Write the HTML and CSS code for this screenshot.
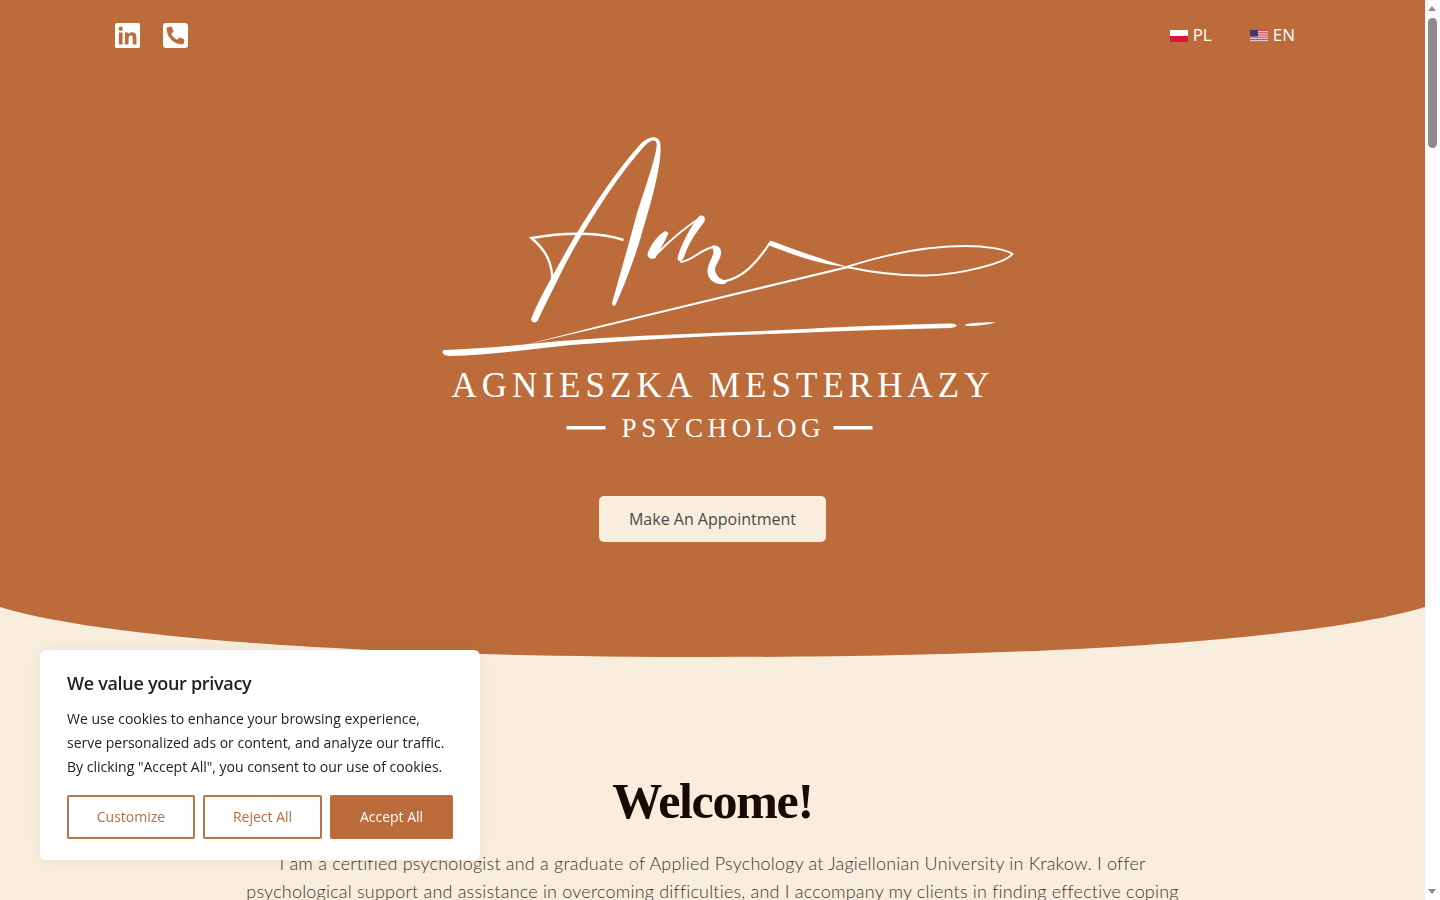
FILE: index.html
```html
<!DOCTYPE html>
<html lang="en">
<head>
  <meta charset="UTF-8">
  <meta name="viewport" content="width=device-width, initial-scale=1">
  <title>Agnieszka Mesterhazy - Psycholog</title>
  <link rel="stylesheet" href="styles.css">
</head>
<body>
  <div class="page">
    <header class="hero">
      <div class="topbar">
        <div class="social">
          <a href="#" aria-label="LinkedIn">
            <svg class="social-icon" viewBox="0 32 448 448"><path fill-rule="evenodd" d="M416 32H31.9C14.3 32 0 46.5 0 64.3v383.4C0 465.5 14.3 480 31.9 480H416c17.6 0 32-14.5 32-32.3V64.3c0-17.8-14.4-32.3-32-32.3zM135.4 416H69V202.2h66.5V416zm-33.2-243c-21.3 0-38.5-17.3-38.5-38.5S80.9 96 102.2 96c21.2 0 38.5 17.3 38.5 38.5 0 21.3-17.2 38.5-38.5 38.5zm282.1 243h-66.4V312c0-24.8-.5-56.7-34.5-56.7-34.6 0-39.9 27-39.9 54.9V416h-66.4V202.2h63.7v29.2h.9c8.9-16.8 30.6-34.5 62.9-34.5 67.2 0 79.7 44.3 79.7 101.9V416z"/></svg>
          </a>
          <a href="#" aria-label="Phone">
            <svg class="social-icon" viewBox="0 32 448 448"><path fill-rule="evenodd" transform="translate(448 0) scale(-1 1)" d="M400 32H48C21.49 32 0 53.49 0 80v352c0 26.51 21.49 48 48 48h352c26.51 0 48-21.49 48-48V80c0-26.51-21.49-48-48-48zM94 416c-7.033 0-13.057-4.873-14.616-11.627l-14.998-65a15 15 0 0 1 8.707-17.16l69.998-29.999a15 15 0 0 1 17.518 4.289l30.997 37.885c48.944-22.963 88.297-62.858 110.779-110.779l-37.885-30.997a15 15 0 0 1-4.289-17.518l30-69.998a15.001 15.001 0 0 1 17.16-8.707l65 14.998A14.997 14.997 0 0 1 384 126c0 160.292-129.945 290-290 290z"/></svg>
          </a>
        </div>
        <nav class="langs">
          <a href="#">
            <svg class="flag" viewBox="0 0 18 12"><rect width="18" height="6" fill="#fff"/><rect y="6" width="18" height="6" fill="#dc143c"/></svg>
            PL
          </a>
          <a href="#">
            <svg class="flag" viewBox="0 0 18 12">
              <rect width="18" height="12" fill="#f4e4e4"/>
              <path d="M0 .5h18M0 2.3h18M0 4.1h18M0 5.9h18M0 7.7h18M0 9.5h18M0 11.3h18" stroke="#c8354a" stroke-width=".9"/>
              <rect width="8" height="6.5" fill="#3c3b6e"/>
            </svg>
            EN
          </a>
        </nav>
      </div>

      <svg class="logo" viewBox="402.5 130 620 320">
        <!-- A -->
        <path class="ink" d="M530.5 319C540 296 552 276 562 258C585 216 618 168 640 144C648 136 657 135 659.5 142C663 160 650 205 640 238C633 262 622 290 615 305Q612 307 611.5 303C618 280 628 245 636 215C644 190 658 150 656 143C655 139 650 140 645 145C620 172 590 218 566 262C556 282 546 302 537 321Q532 325 530.5 319Z"/>
        <path class="line" stroke-width="2.4" d="M623 240C600 232 565 232 531 238C545 250 552 262 552 282"/>
        <!-- m -->
        <path class="ink" d="M647 254C650 245 657 235 665 231L668 233C665 241 658 251 655 258C651 260 647 258 647 254Z"/>
        <path class="line" stroke-width="2" d="M656 254C670 240 688 225 701 217"/>
        <path class="ink" d="M699 216C704 214 706 219 703 223C694 234 687 246 684 256C682 261 679 263 677 259C678 250 690 226 699 216Z"/>
        <path class="line" stroke-width="2" d="M680 262C690 262 702 248 713 247"/>
        <path class="ink" d="M711 246C719 244 722 250 720 256C718 263 713 267 715 272C717 278 722 281 729 280L724 284C715 285 707 280 707 271C707 264 713 256 713 252C713 249 712 248 711 246Z"/>
        <path class="line" stroke-width="2.2" d="M722 281.5C742 279 757 262 770 242"/>
        <!-- long loop -->
        <path class="ink" d="M770 240.5C795 250 820 259 848 267C820 265 793 255 769 245.5Z"/>
        <path class="line" stroke-width="1.9" d="M846 267C880 256 925 246 965 246C985 246 1005 249 1012 254C1005 263 960 275 925 275.5C895 276 870 272 846 267"/>
        <path class="ink" d="M848 265.7L848 268L600 327.5L520 346L600 325.5Z"/>
        <!-- underline -->
        <path class="ink" d="M444 350C480 349 520 345 560 341C640 335 700 333.5 760 331C810 328.5 880 325 950 323.5C958 323.5 958 327.5 950 328C900 329 840 331 770 334C700 336 640 340 570 345C530 349 490 355 450 356C442 356 440 351 444 350Z"/>
        <path class="ink" d="M966 324C975 323 985 322 995 322.5C988 324.5 976 326 968 326C964 326 964 325 966 324Z"/>
        <!-- name -->
        <text class="logo-name" x="451" y="397" textLength="538">AGNIESZKA MESTERHAZY</text>
        <rect class="ink" x="566" y="426" width="39" height="3.5"/>
        <text class="logo-job" x="621" y="437" textLength="199">PSYCHOLOG</text>
        <rect class="ink" x="833" y="426" width="39" height="3.5"/>
      </svg>

      <a class="appointment" href="#">Make An Appointment</a>
    </header>
    <svg class="hero-curve" viewBox="0 0 1425 50" preserveAspectRatio="none"><path d="M0 0C80 25 300 50 712.5 50S1345 25 1425 0Z"/></svg>

    <main class="welcome">
      <h1>Welcome!</h1>
      <p>I am a certified psychologist and a graduate of Applied Psychology at Jagiellonian University in Krakow. I offer psychological support and assistance in overcoming difficulties, and I accompany my clients in finding effective coping</p>
    </main>
  </div>

  <div class="cookie">
    <h2>We value your privacy</h2>
    <p>We use cookies to enhance your browsing experience, serve personalized ads or content, and analyze our traffic. By clicking "Accept All", you consent to our use of cookies.</p>
    <div class="cookie-buttons">
      <button class="btn-outline btn-customize">Customize</button>
      <button class="btn-outline btn-reject">Reject All</button>
      <button class="btn-fill">Accept All</button>
    </div>
  </div>

  <div class="scrollbar">
    <span class="arrow-up"></span>
    <span class="thumb"></span>
    <span class="arrow-down"></span>
  </div>
</body>
</html>
```

FILE: styles.css
```css
html, body {
  height: 100%;
  overflow: hidden;
}
body {
  margin: 0;
  background-color: #f9eedd;
  color: #43342c;
  font-family: "Open Sans", sans-serif;
}
a {
  text-decoration: none;
}
.page {
  width: 1425px;
}
.hero {
  background-color: #bc6c3a;
  height: 607px;
  display: flex;
  flex-direction: column;
  align-items: center;
}
.topbar {
  align-self: stretch;
  display: flex;
  justify-content: space-between;
  padding: 23px 130px 0 115px;
}
.social {
  display: flex;
  gap: 23px;
}
.social-icon {
  display: block;
  width: 25px;
  height: 25px;
  fill: #fff;
}
.langs {
  display: flex;
  gap: 38px;
  padding-top: 1px;
}
.langs a {
  display: flex;
  align-items: center;
  gap: 5px;
  height: 20px;
  color: #fff;
  font-size: 17px;
}
.flag {
  display: block;
  width: 18px;
  height: 12px;
  margin-top: 3px;
}
.logo {
  display: block;
  width: 620px;
  height: 320px;
  margin-top: 82px;
}
.ink {
  fill: #fff;
}
.line {
  fill: none;
  stroke: #fff;
}
.logo-name,
.logo-job {
  font-family: "Liberation Serif", serif;
  fill: #fff;
}
.logo-name {
  font-size: 35px;
}
.logo-job {
  font-size: 27px;
}
.appointment {
  display: block;
  margin-top: 46px;
  padding: 0 29.5px;
  line-height: 46px;
  background-color: #f9eedd;
  border-radius: 5px;
  color: #4a4a4a;
  font-size: 16px;
}
.hero-curve {
  display: block;
  width: 100%;
  height: 50px;
  fill: #bc6c3a;
}
.welcome {
  padding-top: 116px;
  text-align: center;
}
.welcome h1 {
  margin: 0;
  color: #1a0a05;
  font-family: "Liberation Serif", serif;
  font-size: 50px;
  font-weight: bold;
  line-height: 56px;
  letter-spacing: -1.3px;
}
.welcome p {
  width: 950px;
  margin: 20px auto 0;
  font-family: Lato, sans-serif;
  font-size: 18px;
  font-weight: 300;
  line-height: 28px;
  letter-spacing: .2px;
}
.cookie {
  position: fixed;
  left: 40px;
  bottom: 40px;
  box-sizing: border-box;
  width: 440px;
  height: 210px;
  padding: 21px 27px;
  background-color: #fff;
  border-radius: 6px;
  box-shadow: 0 0 18px rgba(0,0,0,0.06);
  color: #212121;
}
.cookie h2 {
  margin: 0;
  font-size: 18px;
  font-weight: 600;
  line-height: 25px;
  letter-spacing: -.3px;
}
.cookie p {
  margin: 11px 0 0;
  font-size: 14px;
  line-height: 24px;
}
.cookie-buttons {
  display: flex;
  gap: 8px;
  margin-top: 16px;
}
.cookie-buttons button {
  height: 44px;
  padding: 0 0 2px;
  border-radius: 2px;
  font-family: "Open Sans", sans-serif;
  font-size: 14px;
}
.btn-outline {
  background-color: #fff;
  border: 2px solid #b87548;
  color: #bc6c3a;
}
.btn-customize {
  width: 128px;
}
.btn-reject {
  width: 119px;
}
.btn-fill {
  width: 123px;
  background-color: #bc6c3a;
  border: 2px solid #bc6c3a;
  color: #fff;
}
/* the window's own scrollbar, drawn because the shot hides it */
.scrollbar {
  position: fixed;
  top: 0;
  right: 0;
  bottom: 0;
  width: 15px;
  background-color: #fdfdfd;
}
.thumb {
  position: absolute;
  top: 18px;
  left: 3px;
  width: 9px;
  height: 130px;
  background-color: #8b8b8b;
  border-radius: 5px;
}
.arrow-up,
.arrow-down {
  position: absolute;
  left: 3px;
  border-left: 4.5px solid transparent;
  border-right: 4.5px solid transparent;
}
.arrow-up {
  top: 6px;
  border-bottom: 5px solid #8b8b8b;
}
.arrow-down {
  bottom: 6px;
  border-top: 5px solid #8b8b8b;
}
```
